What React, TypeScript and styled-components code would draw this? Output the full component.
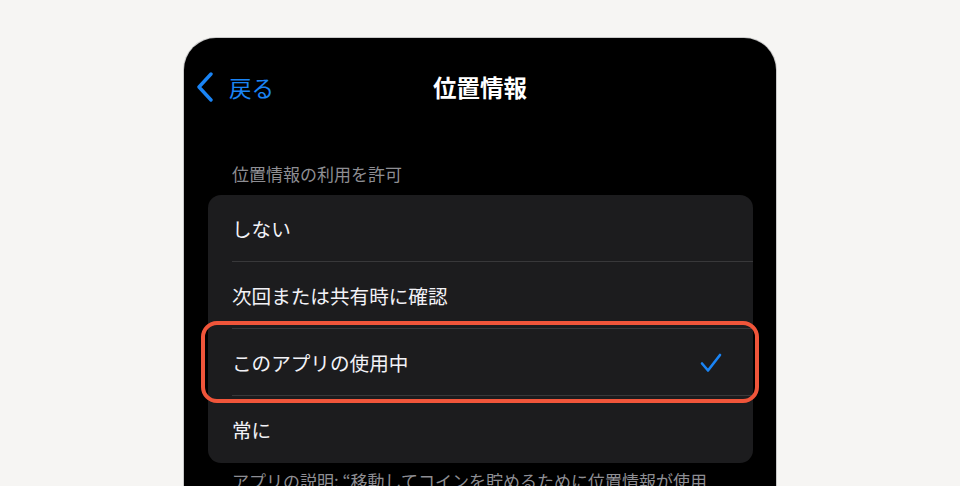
import React from "react";
import styled, { createGlobalStyle } from "styled-components";

const Global = createGlobalStyle`
  html, body {
    margin: 0;
    padding: 0;
    background: #f6f5f3;
    height: 486px;
    overflow: hidden;
  }
  body {
    font-family: "Noto Sans CJK JP", "Noto Sans", sans-serif;
  }
`;

const Page = styled.div`
  width: 960px;
  height: 486px;
  overflow: hidden;
  padding-top: 38px;
  box-sizing: border-box;
  display: flex;
  justify-content: center;
`;

const Phone = styled.div`
  width: 592px;
  height: 520px;
  background: #000;
  border-radius: 32px 32px 0 0;
  box-shadow: 0 0 0 1px #c9c9c9;
  display: flex;
  flex-direction: column;
`;

const NavBar = styled.div`
  position: relative;
  height: 98px;
  display: flex;
  align-items: center;
  justify-content: center;
`;

const BackButton = styled.div`
  position: absolute;
  left: 12px;
  top: 0;
  bottom: 0;
  display: flex;
  align-items: center;
  gap: 15px;
  color: #1a84f5;
  font-size: 22.5px;
`;

const Title = styled.div`
  color: #fff;
  font-size: 23.5px;
  font-weight: 700;
`;

const SectionHeader = styled.div`
  margin: 27px 0 10px 48px;
  color: #8e8e93;
  font-size: 17px;
  line-height: 22px;
`;

const Card = styled.div`
  margin: 0 23px 0 24px;
  background: #1c1c1e;
  border-radius: 13px;
  display: flex;
  flex-direction: column;
`;

const Row = styled.div<{ $last?: boolean }>`
  position: relative;
  height: 67px;
  display: flex;
  align-items: center;
  justify-content: space-between;
  padding: 0 31px 0 24px;
  color: #f2f2f7;
  font-size: 19.6px;
  &::after {
    content: "";
    display: ${(p) => (p.$last ? "none" : "block")};
    position: absolute;
    left: 24px;
    right: 0;
    bottom: 0;
    height: 1px;
    background: #38383a;
  }
`;

const Highlight = styled.div`
  position: absolute;
  left: -7px;
  right: -6px;
  top: -8px;
  bottom: -7px;
  border: 4.5px solid #f0553a;
  border-radius: 16px;
  pointer-events: none;
  z-index: 1;
`;

const Footer = styled.div`
  margin: 7px 0 0 48px;
  color: #8e8e93;
  font-size: 17px;
  line-height: 22px;
  white-space: nowrap;
`;

const Chevron = () => (
  <svg width="18" height="30" viewBox="0 0 18 30">
    <polyline
      points="15,2 3,15 15,28"
      fill="none"
      stroke="#1a84f5"
      strokeWidth="3.4"
      strokeLinecap="round"
      strokeLinejoin="round"
    />
  </svg>
);

const Check = () => (
  <svg width="22" height="20" viewBox="0 0 22 20">
    <polyline
      points="2,10.5 8,17.5 20,2"
      fill="none"
      stroke="#1a84f5"
      strokeWidth="2.6"
      strokeLinecap="round"
      strokeLinejoin="round"
    />
  </svg>
);

const options = [
  { label: "しない" },
  { label: "次回または共有時に確認" },
  { label: "このアプリの使用中", selected: true },
  { label: "常に" },
];

export default function App() {
  return (
    <>
      <Global />
      <Page>
        <Phone>
          <NavBar>
            <BackButton>
              <Chevron />
              <span>戻る</span>
            </BackButton>
            <Title>位置情報</Title>
          </NavBar>
          <SectionHeader>位置情報の利用を許可</SectionHeader>
          <Card>
            {options.map((o, i) => (
              <Row key={o.label} $last={i === options.length - 1}>
                <span>{o.label}</span>
                {o.selected && <Check />}
                {o.selected && <Highlight />}
              </Row>
            ))}
          </Card>
          <Footer>アプリの説明: “移動してコインを貯めるために位置情報が使用</Footer>
        </Phone>
      </Page>
    </>
  );
}
